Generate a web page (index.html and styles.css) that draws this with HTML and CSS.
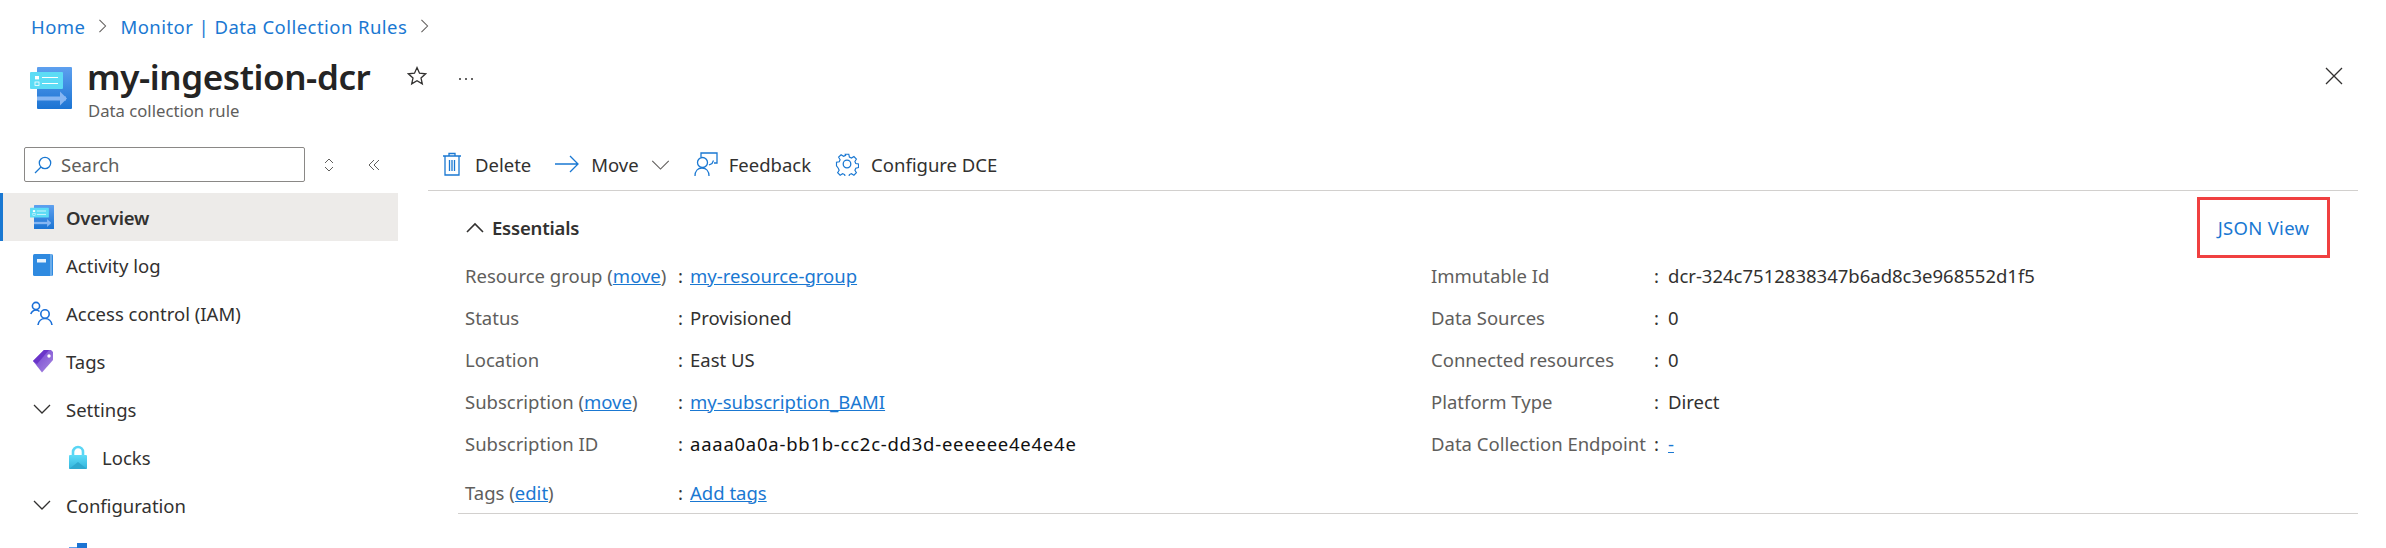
FILE: index.html
```html
<!DOCTYPE html>
<html lang="en">
<head>
<meta charset="UTF-8">
<title>my-ingestion-dcr</title>
<link rel="stylesheet" href="styles.css">
</head>
<body>

<svg class="defs" width="0" height="0">
    <defs>
        <linearGradient id="docBlue" x1="0" y1="0" x2="0" y2="1">
            <stop offset="0" stop-color="#5ea0ef"/>
            <stop offset="1" stop-color="#1b74d3"/>
        </linearGradient>
        <linearGradient id="lockBlue" x1="0" y1="0" x2="0" y2="1">
            <stop offset="0" stop-color="#5fdcf8"/>
            <stop offset="1" stop-color="#32b4dc"/>
        </linearGradient>
        <linearGradient id="tagPurple" x1="0" y1="0" x2="1" y2="1">
            <stop offset="0" stop-color="#6f3bd0"/>
            <stop offset="1" stop-color="#a98be0"/>
        </linearGradient>
        <symbol id="dcrIcon" viewBox="0 0 42 42">
            <rect x="7" y="0" width="35" height="42" rx="1" fill="url(#docBlue)"/>
            <rect x="0" y="5" width="33" height="17" rx="1" fill="#5ddcf5"/>
            <rect x="5" y="9" width="4" height="3.4" fill="#fff"/>
            <rect x="5" y="15" width="4" height="3.4" fill="none" stroke="#fff" stroke-width=".8"/>
            <path d="M12 10.5h16M12 16.5h16" stroke="#fff" stroke-width="1.2"/>
            <path d="M7 29.5h29v4H7z" fill="#86b6f2"/>
            <path d="M30 24.5l7 7-7 7z" fill="#86b6f2"/>
        </symbol>
    </defs>
</svg>

<nav class="breadcrumb">
    <a href="#">Home</a>
    <svg class="crumb-sep" viewBox="0 0 10 16"><path d="M1.5 1l7 7-7 7"/></svg>
    <a href="#">Monitor | Data Collection Rules</a>
    <svg class="crumb-sep" viewBox="0 0 10 16"><path d="M1.5 1l7 7-7 7"/></svg>
</nav>

<header class="page-head">
    <svg class="page-icon"><use href="#dcrIcon"/></svg>
    <div class="page-titles">
        <h1>my-ingestion-dcr</h1>
        <div class="page-sub">Data collection rule</div>
    </div>
    <svg class="star" viewBox="0 0 20 20"><path d="M10 1.6l2.5 5.6 6.1.6-4.600 4.100 1.300 6-5.300-3.100-5.300 3.100 1.300-6L1.400 7.800l6.100-.6z"/></svg>
    <svg class="dots" viewBox="0 0 16 4"><circle cx="2" cy="2" r="1"/><circle cx="8" cy="2" r="1"/><circle cx="14" cy="2" r="1"/></svg>
    <svg class="close" viewBox="0 0 18 18"><path d="M1 1l16 16M17 1L1 17"/></svg>
</header>

<div class="layout">
    <aside class="sidebar">
        <div class="search-row">
            <div class="search-box">
                <svg class="search-icon" viewBox="0 0 18 18"><circle cx="11" cy="7" r="5.700"/><path d="M7 11l-6 6"/></svg>
                <span>Search</span>
            </div>
            <svg class="updown" viewBox="0 0 10 14"><path d="M1 5l4-4 4 4M1 9l4 4 4-4"/></svg>
            <svg class="collapse" viewBox="0 0 12 12"><path d="M6 1L1 6l5 5M11 1L6 6l5 5"/></svg>
        </div>
        <ul class="menu">
            <li class="menu-item active">
                <svg class="menu-icon"><use href="#dcrIcon"/></svg>
                <span>Overview</span>
            </li>
            <li class="menu-item">
                <svg class="menu-icon" viewBox="0 0 24 24">
                    <rect x="3" y="1" width="20" height="22" rx="1.500" fill="#2f8ae0"/>
                    <path d="M21 1v22" stroke="#a9d0f5" stroke-width="1"/>
                    <rect x="7" y="6" width="9" height="3.500" fill="#e8f3fd"/>
                </svg>
                <span>Activity log</span>
            </li>
            <li class="menu-item">
                <svg class="menu-icon" viewBox="0 0 24 24" fill="none" stroke="#1a6fd8" stroke-width="1.600">
                    <circle cx="6" cy="5" r="3.600"/>
                    <path d="M.8 13c1-2.500 3-4 5.200-4 1.500 0 2.500.5 3.500 1.500"/>
                    <circle cx="15" cy="13" r="4.200"/>
                    <path d="M8 24c.5-4 3.500-6.500 7-6.500s6.500 2.500 7 6.500"/>
                </svg>
                <span>Access control (IAM)</span>
            </li>
            <li class="menu-item">
                <svg class="menu-icon" viewBox="0 0 24 24">
                    <path d="M3 12L14 1h7l2 2v8L12 23.500z" fill="url(#tagPurple)"/>
                    <path d="M3 12L14 1h5L7 15z" fill="#6a34c9"/>
                    <circle cx="19" cy="7" r="1.700" fill="#fff"/>
                </svg>
                <span>Tags</span>
            </li>
            <li class="menu-item">
                <svg class="menu-icon chevron" viewBox="0 0 24 24"><path d="M4 8l8 8 8-8"/></svg>
                <span>Settings</span>
            </li>
            <li class="menu-item sub">
                <svg class="menu-icon" viewBox="0 0 18 24">
                    <path d="M4 10V7a5 5 0 0110 0v3" fill="none" stroke="#5ad6f5" stroke-width="2.600"/>
                    <rect x="0" y="10" width="18" height="14" rx="1" fill="url(#lockBlue)"/>
                    <path d="M0 24l9-7 9 7z" fill="#2fa9cf"/>
                </svg>
                <span>Locks</span>
            </li>
            <li class="menu-item">
                <svg class="menu-icon chevron" viewBox="0 0 24 24"><path d="M4 8l8 8 8-8"/></svg>
                <span>Configuration</span>
            </li>
            <li class="menu-item sub">
                <svg class="menu-icon" viewBox="0 0 18 24">
                    <rect x="0" y="6" width="12" height="14" fill="#5ea0ef"/>
                    <rect x="8" y="2" width="10" height="8" fill="#1b74d3"/>
                </svg>
                <span>Resources</span>
            </li>
        </ul>
    </aside>

    <main class="content">
        <div class="toolbar">
            <button class="tool">
                <svg class="tool-icon trash" viewBox="0 0 20 24"><path d="M1 4h18M7 4V1.500h6V4M3 4v19h14V4M7.500 8v11M10 8v11M12.500 8v11"/></svg>
                <span>Delete</span>
            </button>
            <button class="tool">
                <svg class="tool-icon arrow" viewBox="0 0 24 18"><path d="M0 9h23M15 1l8 8-8 8"/></svg>
                <span>Move</span>
                <svg class="tool-chevron" viewBox="0 0 20 12"><path d="M1 2l9 9 9-9"/></svg>
            </button>
            <button class="tool">
                <svg class="tool-icon feedback" viewBox="0 0 24 24"><path d="M7 5V1h16v10h-3M1 24c0-5 3-8 7-8s7 3 7 8"/><circle cx="8.500" cy="10.500" r="5"/><path d="M15 13l3-1.500 1.500-3"/></svg>
                <span>Feedback</span>
            </button>
            <button class="tool">
                <svg class="tool-icon gear" viewBox="0 0 24 24"><circle cx="12" cy="12" r="3.800"/><path d="M10 1h4l.7 3.200 2.300 1 2.800-1.700 2.800 2.800-1.700 2.800 1 2.300 3.100.6v4l-3.100.7-1 2.300 1.700 2.800-2.800 2.800-2.800-1.700-2.300 1-.7 3.100h-4l-.7-3.100-2.300-1-2.800 1.700-2.800-2.800 1.700-2.800-1-2.300L.1 14v-4l3.100-.6 1-2.300L2.500 4.300l2.800-2.800 2.800 1.700 2.300-1z" transform="translate(1.400 1.400) scale(.885)"/></svg>
                <span>Configure DCE</span>
            </button>
        </div>

        <section class="essentials">
            <div class="essentials-head">
                <div class="essentials-title">
                    <svg class="chevron-up" viewBox="0 0 18 11"><path d="M1 10l8-8 8 8"/></svg>
                    <span>Essentials</span>
                </div>
                <a class="json-view" href="#">JSON View</a>
            </div>
            <div class="props">
                <dl class="prop-col left">
                    <div class="prop"><dt>Resource group (<a href="#">move</a>)</dt><dd><a href="#">my-resource-group</a></dd></div>
                    <div class="prop"><dt>Status</dt><dd>Provisioned</dd></div>
                    <div class="prop"><dt>Location</dt><dd>East US</dd></div>
                    <div class="prop"><dt>Subscription (<a href="#">move</a>)</dt><dd><a href="#">my-subscription_BAMI</a></dd></div>
                    <div class="prop"><dt>Subscription ID</dt><dd class="strong">aaaa0a0a-bb1b-cc2c-dd3d-eeeeee4e4e4e</dd></div>
                    <div class="prop tags"><dt>Tags (<a href="#">edit</a>)</dt><dd><a href="#">Add tags</a></dd></div>
                </dl>
                <dl class="prop-col right">
                    <div class="prop"><dt>Immutable Id</dt><dd>dcr-324c7512838347b6ad8c3e968552d1f5</dd></div>
                    <div class="prop"><dt>Data Sources</dt><dd>0</dd></div>
                    <div class="prop"><dt>Connected resources</dt><dd>0</dd></div>
                    <div class="prop"><dt>Platform Type</dt><dd>Direct</dd></div>
                    <div class="prop"><dt>Data Collection Endpoint</dt><dd><a href="#">-</a></dd></div>
                </dl>
            </div>
        </section>
    </main>
</div>

</body>
</html>
```

FILE: styles.css
```css
* {
    box-sizing: border-box;
}
html, body {
    height: 100%;
}
body {
    margin: 0;
    overflow: hidden;
    background: #fff;
    color: #323130;
    font-family: "Noto Sans", "Open Sans", sans-serif;
    font-size: 18.5px;
}
a {
    color: #1a78d2;
}
.defs {
    display: block;
    height: 0;
}

/* breadcrumb + title */
.breadcrumb {
    display: flex;
    align-items: center;
    gap: 13px;
    height: 28px;
    margin-top: 12px;
    padding-left: 31px;
    letter-spacing: 0.45px;
}
.breadcrumb a {
    text-decoration: none;
}
.crumb-sep {
    width: 9px;
    height: 14px;
    fill: none;
    stroke: #605e5c;
    stroke-width: 1.2;
}
.page-head {
    display: flex;
    align-items: flex-start;
    height: 100px;
    padding: 27px 43px 0 30px;
}
.page-icon {
    width: 42px;
    height: 42px;
    margin-right: 16px;
    flex: none;
}
.page-titles {
    width: 319px;
}
h1 {
    margin: -12px 0 0 -1px;
    font-size: 35px;
    font-weight: 600;
    line-height: 44px;
    color: #242424;
    letter-spacing: -0.4px;
}
.page-sub {
    margin-top: 1px;
    font-size: 16.7px;
    line-height: 22px;
    color: #605e5c;
}
.star {
    width: 20px;
    height: 20px;
    margin-top: -1px;
    fill: none;
    stroke: #323130;
    stroke-width: 1.3;
}
.dots {
    width: 16px;
    height: 4px;
    margin: 10px 0 0 31px;
    fill: #323130;
}
.close {
    width: 18px;
    height: 18px;
    margin-left: auto;
    fill: none;
    stroke: #323130;
    stroke-width: 1.3;
}

/* sidebar */
.layout {
    display: flex;
}
.sidebar {
    width: 398px;
    flex: none;
}
.search-row {
    display: flex;
    align-items: center;
    height: 53px;
    padding: 7px 0 11px 24px;
}
.search-box {
    display: flex;
    align-items: center;
    gap: 9px;
    width: 281px;
    height: 35px;
    padding-left: 9px;
    border: 1px solid #8a8886;
    border-radius: 2px;
    color: #605e5c;
}
.search-icon {
    width: 18px;
    height: 18px;
    fill: none;
    stroke: #1a78d2;
    stroke-width: 1.3;
}
.updown {
    width: 10px;
    height: 14px;
    margin-left: 19px;
    fill: none;
    stroke: #605e5c;
    stroke-width: 1;
}
.collapse {
    width: 12px;
    height: 12px;
    margin-left: 34px;
    fill: none;
    stroke: #605e5c;
    stroke-width: 1;
}
.menu {
    list-style: none;
    margin: 0;
    padding: 0;
}
.menu-item {
    display: flex;
    align-items: center;
    gap: 12px;
    height: 48px;
    padding-left: 30px;
}
.menu-item.active {
    background: #edebe9;
    border-left: 3px solid #1a78d2;
    padding-left: 27px;
    font-weight: 600;
    letter-spacing: -0.2px;
}
.menu-item.sub {
    gap: 15px;
    padding-left: 69px;
}
.menu-icon {
    width: 24px;
    height: 24px;
    flex: none;
}
.menu-item.sub .menu-icon {
    width: 18px;
}
.chevron {
    fill: none;
    stroke: #323130;
    stroke-width: 1.3;
}

/* main area */
.content {
    flex: 1;
    margin: 0 28px 0 30px;
}
.toolbar {
    display: flex;
    align-items: center;
    height: 51px;
    padding: 0 0 2px 14px;
    border-bottom: 1px solid #d2d0ce;
}
.tool {
    display: flex;
    align-items: center;
    gap: 12px;
    margin-right: 24px;
    padding: 0;
    border: 0;
    background: none;
    color: #323130;
    font: inherit;
}
.tool-icon {
    width: 24px;
    height: 24px;
    fill: none;
    stroke: #1a78d2;
    stroke-width: 1.3;
}
.tool-icon.trash {
    width: 20px;
    margin-right: 1px;
}
.tool-icon.feedback {
    margin-right: -1px;
}
.tool-chevron {
    width: 19px;
    height: 11px;
    fill: none;
    stroke: #605e5c;
    stroke-width: 1.2;
}

/* essentials */
.essentials {
    margin-left: 30px;
    height: 323px;
    border-bottom: 1px solid #d2d0ce;
}
.essentials-head {
    display: flex;
    align-items: center;
    justify-content: space-between;
    height: 68px;
    padding: 5px 28px 0 8px;
}
.essentials-title {
    display: flex;
    align-items: center;
    gap: 8px;
    font-weight: 600;
    letter-spacing: -0.2px;
}
.chevron-up {
    width: 18px;
    height: 11px;
    fill: none;
    stroke: #323130;
    stroke-width: 1.6;
}
.json-view {
    display: flex;
    align-items: center;
    justify-content: center;
    width: 133px;
    height: 61px;
    border: 3px solid #f04040;
    text-decoration: none;
    letter-spacing: 0.3px;
}
.props {
    display: flex;
    margin-top: -5px;
    padding-left: 7px;
}
.prop-col {
    margin: 0;
}
.prop-col.left {
    width: 966px;
}
.prop {
    display: flex;
    align-items: center;
    height: 42px;
}
.prop.tags {
    height: 50px;
    padding-top: 6px;
}
.prop dt {
    flex: none;
    color: #605e5c;
}
.left .prop dt {
    width: 213px;
}
.right .prop dt {
    width: 223px;
}
.prop dd {
    margin: 0;
    color: #323130;
}
.prop dd::before {
    content: ":";
    display: inline-block;
    width: 12px;
    color: #323130;
}
.right .prop dd::before {
    width: 14px;
}
.prop dd.strong {
    color: #111;
    letter-spacing: 0.75px;
}
.prop dd.strong::before {
    letter-spacing: 0;
}
```
